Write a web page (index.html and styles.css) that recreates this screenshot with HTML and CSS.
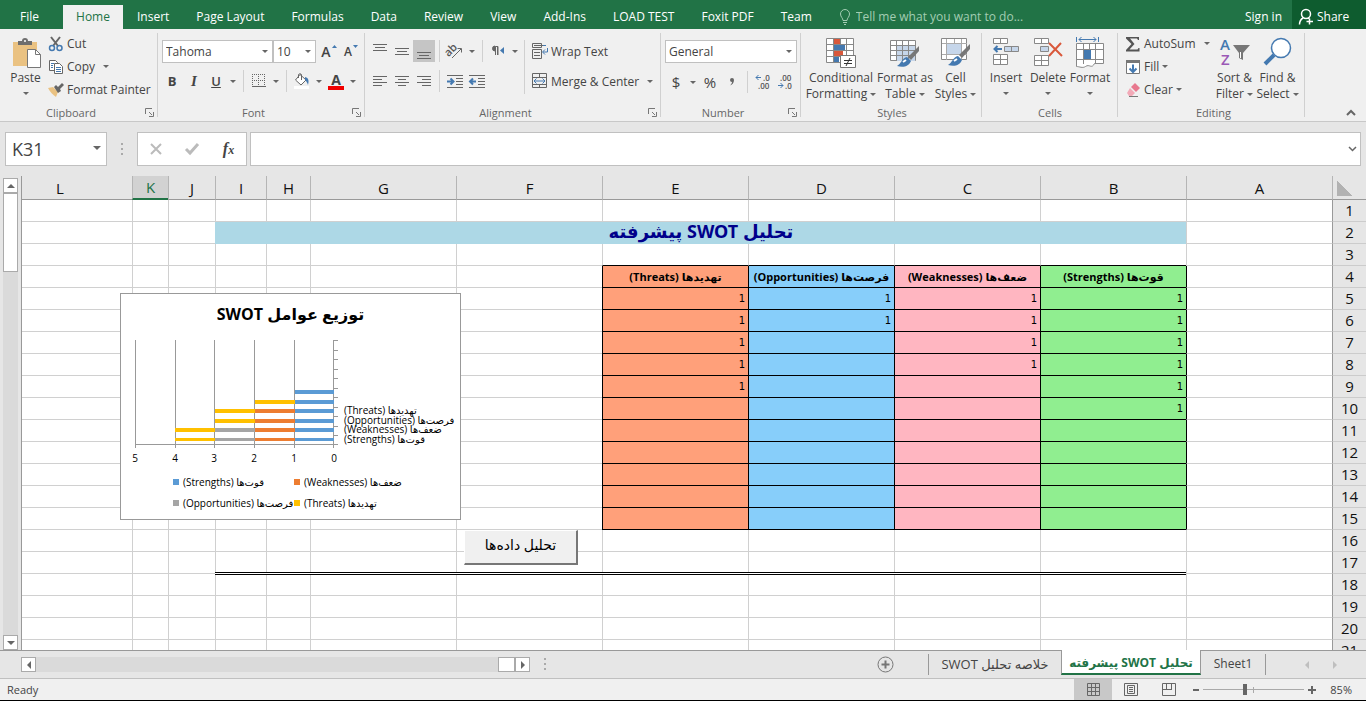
FILE: index.html
```
<!DOCTYPE html>
<html lang="en">
  <head>
    <meta charset="UTF-8" />
    <meta name="viewport" content="width=device-width, initial-scale=1.0" />
    <title>Excel - SWOT</title>
    <link rel="stylesheet" href="styles.css">
  </head>
  <body>
    <nav class="tabs">
      <a href="#" class="file">File</a>
      <a href="#" class="active">Home</a>
      <a href="#">Insert</a>
      <a href="#">Page Layout</a>
      <a href="#">Formulas</a>
      <a href="#">Data</a>
      <a href="#">Review</a>
      <a href="#">View</a>
      <a href="#">Add-Ins</a>
      <a href="#">LOAD TEST</a>
      <a href="#">Foxit PDF</a>
      <a href="#">Team</a>
      <label class="tell">
        <svg width="12" height="16" fill="none" stroke="#a3cdb3"><path d="M4 11.500C4 9 1.500 8 1.500 5a4.500 4.500 0 0 1 9 0C10.500 8 8 9 8 11.500zM4 13.500h4M5 15.500h2" /></svg>
        <input type="text" placeholder="Tell me what you want to do..." />
      </label>
      <a href="#" class="sign">Sign in</a>
      <a href="#" class="share">
        <svg width="16" height="18" fill="none" stroke="#fff" stroke-width="1.500"><circle cx="8" cy="6" r="4.500" /><path d="M5 10C2.500 11.500 1.500 13.500 1.500 16.500M10 10l2 1.500M11.500 10.500v6M8.500 13.500h6.500" /></svg>
        Share
      </a>
    </nav>

    <div class="ribbon">
      <section class="group clipboard">
        <div class="content">
          <button class="big paste">
            <svg width="30" height="32"><path d="M2 5h24v24H2z" fill="#eac282" /><path d="M7 8V4h4a3 3 0 0 1 6 0h4v4z" fill="#6e6e6e" /><circle cx="14" cy="4" r="1" fill="#fff" /><path d="M16.500 12.500h8l5 5v13h-13z" fill="#fff" stroke="#777" /><path d="M24.500 12.500v5h5" fill="none" stroke="#777" /></svg>
            <span>Paste</span><i class="caret"></i>
          </button>
          <div class="list">
            <button class="small">
              <svg width="16" height="16" fill="none"><path d="M3 1l7 9M12 1L5 10" stroke="#666" stroke-width="2" /><circle cx="4" cy="12" r="2.500" stroke="#4479b0" stroke-width="1.500" /><circle cx="11.500" cy="12" r="2.500" stroke="#4479b0" stroke-width="1.500" /></svg>
              Cut
            </button>
            <button class="small">
              <svg width="16" height="16" fill="#fff" stroke="#666"><path d="M1.500 1.500h6l2 2v8h-8z" /><path d="M6.500 4.500h5l3 3v7h-8z" /><path d="M3 4.500h3M3 6.500h2M3 8.500h2M8 8.500h5M8 10.500h5M8 12.500h5" stroke="#4479b0" /></svg>
              Copy <i class="caret apart"></i>
            </button>
            <button class="small">
              <svg width="16" height="16"><path d="M0 6l5-1 5 5-2 5C5 13 2 10 0 6z" fill="#eac282" /><path d="M6 5l2-2 2 2 4-4 2 2-4 4 1 2-3 2z" fill="#666" /></svg>
              Format Painter
            </button>
          </div>
        </div>
        <h2 class="has-launch">Clipboard <svg class="launch" width="9" height="9"><path d="M.5 6V.5H7M4 4l3 3M8.500 4v4.500H4" fill="none" stroke="#777" /></svg></h2>
      </section>

      <section class="group font">
        <div class="content rows">
          <div class="row">
            <div class="combo font-name"><select aria-label="Font"><option>Tahoma</option></select></div>
            <div class="combo font-size"><select aria-label="Font size"><option>10</option></select></div>
            <button class="icon grow" aria-label="Increase font size"><b>A</b><svg width="5" height="14"><path d="M0 4l2.500-3L5 4z" fill="#4479b0" /></svg></button>
            <button class="icon shrink" aria-label="Decrease font size"><b>A</b><svg width="5" height="14"><path d="M0 1h5L2.500 4z" fill="#4479b0" /></svg></button>
          </div>
          <div class="row">
            <button class="icon letter"><b>B</b></button>
            <button class="icon letter"><em>I</em></button>
            <button class="icon letter"><u>U</u></button>
            <button class="drop" aria-label="Underline options"><i class="caret"></i></button>
            <span class="sep"></span>
            <button class="icon" aria-label="Borders"><svg width="14" height="14" fill="none" stroke="#666"><path d="M0 .5h13M0 6.500h13M.5 0v13M6.500 0v13M12.500 0v13" stroke-dasharray="1 1" /><path d="M0 12.500h14" /></svg></button>
            <button class="drop" aria-label="Border options"><i class="caret"></i></button>
            <span class="sep"></span>
            <button class="icon" aria-label="Fill color"><svg width="18" height="16"><path d="M7 1.500l6 5.500-5 5-5.500-5z" fill="#fff" stroke="#666" /><path d="M5.500 5V1.500a2 2 0 0 1 3 0V7" fill="none" stroke="#666" /><path d="M12 4c4 1 4 4 3 8-1-3-2-4-3-5z" fill="#4479b0" /><path d="M1 13h15v3H1z" fill="#fff" /></svg></button>
            <button class="drop" aria-label="Fill options"><i class="caret"></i></button>
            <button class="icon fontcolor"><b>A</b></button>
            <button class="drop" aria-label="Font color options"><i class="caret"></i></button>
          </div>
        </div>
        <h2 class="has-launch">Font <svg class="launch" width="9" height="9"><path d="M.5 6V.5H7M4 4l3 3M8.500 4v4.500H4" fill="none" stroke="#777" /></svg></h2>
      </section>

      <section class="group align">
        <div class="content">
          <div class="rows">
            <div class="row">
              <button class="icon" aria-label="Top align"><svg width="14" height="16" stroke="#666"><path d="M0 1.500h14M2 4.500h10M0 7.500h14" /></svg></button>
              <button class="icon" aria-label="Middle align"><svg width="14" height="16" stroke="#666"><path d="M0 5.500h14M2 8.500h10M0 11.500h14" /></svg></button>
              <button class="icon on" aria-label="Bottom align"><svg width="14" height="16" stroke="#666"><path d="M0 9.500h14M2 12.500h10M0 15.500h14" /></svg></button>
              <span class="sep"></span>
              <button class="icon" aria-label="Orientation"><svg width="18" height="16"><text x="-1" y="10" transform="rotate(-45 6 8)" class="ab">ab</text><path d="M6 15l9-9M11.500 5.500H15.500v4" fill="none" stroke="#666" /></svg></button>
              <button class="drop" aria-label="Orientation options"><i class="caret"></i></button>
              <span class="sep"></span>
              <button class="icon" aria-label="Text direction"><svg width="14" height="10"><path d="M4.500 9V.5H7V9M4 0a2.500 2.500 0 0 0 0 5z" fill="#666" stroke="#666" /><path d="M5.500 1v8" stroke="#f0f0f0" /><path d="M13 1v7L9 4.500z" fill="#4479b0" /></svg></button>
              <button class="drop" aria-label="Direction options"><i class="caret"></i></button>
            </div>
            <div class="row">
              <button class="icon" aria-label="Align left"><svg width="14" height="12" stroke="#666"><path d="M0 1.500h14M0 4.500h9M0 7.500h14M0 10.500h9" /></svg></button>
              <button class="icon" aria-label="Center"><svg width="14" height="12" stroke="#666"><path d="M0 1.500h14M3 4.500h8M0 7.500h14M3 10.500h8" /></svg></button>
              <button class="icon" aria-label="Align right"><svg width="14" height="12" stroke="#666"><path d="M0 1.500h14M5 4.500h9M0 7.500h14M5 10.500h9" /></svg></button>
              <span class="sep"></span>
              <button class="icon" aria-label="Increase indent"><svg width="16" height="13" fill="none" stroke="#666"><path d="M0 .5h16M9 3.500h7M9 6.500h7M9 9.500h7M0 12.500h16" /><path d="M0 6.500h5M3.500 3.500l3 3-3 3" stroke="#4479b0" stroke-width="2" /></svg></button>
              <button class="icon" aria-label="Decrease indent"><svg width="16" height="13" fill="none" stroke="#666"><path d="M0 .5h16M9 3.500h7M9 6.500h7M9 9.500h7M0 12.500h16" /><path d="M2 6.500h5M4 3.500l-3 3 3 3" stroke="#4479b0" stroke-width="2" /></svg></button>
            </div>
          </div>
          <span class="sep tall"></span>
          <div class="rows">
            <button class="small">
              <svg width="16" height="16" fill="none" stroke="#666"><path d="M.5 .5v4h9v-4zM.5 6.500v9h9v-9zM2 2.500h12M2 9.500h6M2 12.500h6" /><path d="M11 2.500h3M15.500 5v4H11M13 6.500L10.500 9l2.500 2.500" stroke="#4479b0" /></svg>
              Wrap Text
            </button>
            <button class="small">
              <svg width="16" height="16" fill="none" stroke="#666"><path d="M.5 .5h14v14H.5zM0 4.500h15M0 11.500h15M7.500 0v4M7.500 12v3" /><path d="M2 8h11M4.500 5.500L2 8l2.500 2.500M10.500 5.500L13 8l-2.500 2.500" stroke="#4479b0" /></svg>
              Merge &amp; Center <i class="caret apart"></i>
            </button>
          </div>
        </div>
        <h2 class="has-launch">Alignment <svg class="launch" width="9" height="9"><path d="M.5 6V.5H7M4 4l3 3M8.500 4v4.500H4" fill="none" stroke="#777" /></svg></h2>
      </section>

      <section class="group number">
        <div class="content rows">
          <div class="combo"><select aria-label="Number format"><option>General</option></select></div>
          <div class="row">
            <button class="icon sign-mark">$</button>
            <button class="drop" aria-label="Currency options"><i class="caret"></i></button>
            <button class="icon sign-mark">%</button>
            <button class="icon" aria-label="Comma style"><svg width="6" height="10"><path d="M1 3a2 2 0 1 1 4 0C5 6 3 8 1 8.500 2.500 7 3 6 3 5a2 2 0 0 1-2-2z" fill="#666" /></svg></button>
            <span class="sep"></span>
            <button class="icon" aria-label="Increase decimal"><svg width="16" height="16" class="dec"><text x="8" y="7">.0</text><text x="3" y="15">.00</text><path d="M1 3.500h5M3.500 1L1 3.500 3.500 6" fill="none" stroke="#4479b0" /></svg></button>
            <button class="icon" aria-label="Decrease decimal"><svg width="16" height="16" class="dec"><text x="3" y="7">.00</text><text x="8" y="15">.0</text><path d="M1 11.500h5M3.500 9L6 11.500 3.500 14" fill="none" stroke="#4479b0" /></svg></button>
          </div>
        </div>
        <h2 class="has-launch">Number <svg class="launch" width="9" height="9"><path d="M.5 6V.5H7M4 4l3 3M8.500 4v4.500H4" fill="none" stroke="#777" /></svg></h2>
      </section>

      <section class="group styles">
        <div class="content">
          <button class="big">
            <svg width="30" height="32"><path d="M.5 1.500h27v24H.5z" fill="#fff" stroke="#888" /><path d="M8 2h6v5H8zM8 13h9v6H8z" fill="#d9583b" /><path d="M8 7h11v6H8zM8 19h5v6H8z" fill="#4479b0" /><path d="M7.500 2v24M20.500 2v24M14.500 2v5M1 7.500h27M1 13.500h27M1 19.500h27" fill="none" stroke="#888" /><path d="M14.500 18.500h15v12h-15z" fill="#fff" stroke="#777" /><path d="M18 23.500h8M18 26.500h8M24 21l-4 8" stroke="#333" /></svg>
            <span>Conditional<br />Formatting <i class="caret"></i></span>
          </button>
          <button class="big">
            <svg width="30" height="32"><path d="M.5 3.500h25v20H.5z" fill="#fff" stroke="#888" /><path d="M7 9h18v15H7z" fill="#c6d6ea" /><path d="M6.500 4v20M12.500 4v20M18.500 4v20M1 8.500h25M1 13.500h25M1 18.500h25" stroke="#888" /><path d="M29 9v5l-8 9-3-3z" fill="#777" /><path d="M17 20l4 4c-2 5-7 7-14 5 4-2 5-8 10-9z" fill="#4479b0" /><path d="M13 25l3-2" stroke="#fff" stroke-width="2" /></svg>
            <span>Format as<br />Table <i class="caret"></i></span>
          </button>
          <button class="big">
            <svg width="30" height="32"><path d="M.5 1.500h25v21H.5z" fill="#fff" stroke="#888" /><path d="M6 7h14v10H6z" fill="#c6d6ea" /><path d="M5.500 2v21M20.500 2v21M13.500 2v4M1 6.500h25M1 17.500h25" stroke="#aaa" /><path d="M29 7v5l-8 9-3-3z" fill="#777" /><path d="M17 19l4 4c-2 5-7 7-14 5 4-2 5-8 10-9z" fill="#4479b0" /><path d="M13 24l3-2" stroke="#fff" stroke-width="2" /></svg>
            <span>Cell<br />Styles <i class="caret"></i></span>
          </button>
        </div>
        <h2>Styles</h2>
      </section>

      <section class="group cells">
        <div class="content">
          <button class="big">
            <svg width="28" height="32" fill="#fff" stroke="#888"><path d="M1.500 1.500h14v5h-14zM8.500 1.500v5M1.500 17.500h14v10h-14zM8.500 17.500v10M1.500 22.500h14" /><path d="M12.500 9.500h14v5h-14zM19.500 9.500v5" fill="#c6d6ea" /><path d="M3 12h7M5.500 9L2.500 12l3 3" fill="none" stroke="#4479b0" stroke-width="2" /></svg>
            <span>Insert</span><i class="caret"></i>
          </button>
          <button class="big">
            <svg width="30" height="32" fill="#fff" stroke="#888"><path d="M1.500 1.500h14v5h-14zM8.500 1.500v5M1.500 18.500h14v10h-14zM8.500 18.500v10M1.500 23.500h14" /><path d="M7.500 9.500h8v5h-8z" fill="#c6d6ea" /><path d="M16 6l13 13M28 6L16 19" stroke="#d9583b" stroke-width="2" /></svg>
            <span>Delete</span><i class="caret"></i>
          </button>
          <button class="big">
            <svg width="30" height="32" fill="#fff" stroke="#888"><path d="M1.500 6.500h27v20h-9c-3 6-5 0-9 3-3 2-6 0-9 0z" /><path d="M1 12.500h27M1 22.500h27M8.500 7v20M20.500 7v20M14.500 7v5" /><path d="M9 13h7v9H9z" fill="#4479b0" stroke="none" /><path d="M1.500 0v5M23.500 0v5M4 2.500h17M6.500 0L4 2.500 6.500 5M18.500 0L21 2.500 18.500 5" fill="none" stroke="#4479b0" /></svg>
            <span>Format</span><i class="caret"></i>
          </button>
        </div>
        <h2>Cells</h2>
      </section>

      <section class="group editing">
        <div class="content">
          <div class="list">
            <button class="small">
              <svg width="16" height="16"><path d="M1 1h13v3h-1l-1-1.500H5L9.500 8 4.500 13.500h8L13.500 12h1v3.500H1v-1.500L6.500 8 1 2.500z" fill="#555" /></svg>
              AutoSum <i class="caret apart"></i>
            </button>
            <button class="small">
              <svg width="16" height="16"><path d="M1.500 1.500h13v13h-13z" fill="#fff" stroke="#777" /><path d="M1 1h14v3H1z" fill="#777" /><path d="M8 5.500v7M4.500 9.500L8 13l3.500-3.500" fill="none" stroke="#4479b0" stroke-width="2" /></svg>
              Fill <i class="caret"></i>
            </button>
            <button class="small">
              <svg width="16" height="16"><path d="M10 1l5 5-4 4-5-5z" fill="#e8788e" /><path d="M5 6l5 5-3 3H4L2 11z" fill="#f2a9b7" /><path d="M4 14.500h9" stroke="#777" /></svg>
              Clear <i class="caret"></i>
            </button>
          </div>
          <button class="big">
            <svg width="30" height="32"><text x="0" y="13" class="az-a">A</text><text x="1" y="28" class="az-z">Z</text><path d="M13 8h17l-7 8v7l-4-2v-5z" fill="#777" /><path d="M20.500 15v6" stroke="#fff" /></svg>
            <span>Sort &amp;<br />Filter <i class="caret"></i></span>
          </button>
          <button class="big">
            <svg width="30" height="32" fill="none" stroke="#4479b0"><path d="M11 18l-9 9" stroke-width="4" /><circle cx="18" cy="11" r="9.500" fill="#fff" stroke-width="1.500" /></svg>
            <span>Find &amp;<br />Select <i class="caret"></i></span>
          </button>
        </div>
        <h2>Editing</h2>
      </section>
      <button class="collapse" aria-label="Collapse ribbon"><svg width="10" height="7"><path d="M1 6l4-4 4 4" fill="none" stroke="#666" stroke-width="2" /></svg></button>
    </div>

    <div class="formula">
      <div class="combo name-box"><input type="text" value="K31" aria-label="Name box" /></div>
      <svg class="dots" width="3" height="13" fill="#aaa"><path d="M0 0h2v2H0zM0 5h2v2H0zM0 10h2v2H0z" /></svg>
      <div class="entry">
        <button aria-label="Cancel"><svg width="12" height="12"><path d="M1 1l10 10M11 1L1 11" stroke="#bbb" stroke-width="2" /></svg></button>
        <button aria-label="Enter"><svg width="14" height="12"><path d="M1 6l4 4 8-9" fill="none" stroke="#bbb" stroke-width="3" /></svg></button>
        <button class="fx">f<small>x</small></button>
      </div>
      <div class="formula-text">
        <input type="text" aria-label="Formula" />
        <svg width="9" height="6"><path d="M1 1l3.500 3.500L8 1" fill="none" stroke="#666" stroke-width="1.500" /></svg>
      </div>
    </div>

    <main class="sheet">
      <div class="vscroll">
        <button aria-label="Scroll up"><i class="caret up"></i></button>
        <div class="track"><div class="thumb"></div></div>
        <button class="down" aria-label="Scroll down"><i class="caret down"></i></button>
      </div>
      <div class="grid">
        <table dir="rtl">
          <colgroup>
            <col class="num" /><col class="wide" /><col class="wide" /><col class="wide" /><col class="wide" /><col class="wide" /><col class="wide" /><col class="wide" />
            <col class="h" /><col class="i" /><col class="j" /><col class="k" /><col />
          </colgroup>
          <thead></thead>
          <tbody></tbody>
        </table>

        <figure class="chart">
          <figcaption dir="rtl">توزیع عوامل SWOT</figcaption>
          <svg width="339" height="130">
            <path class="line" d="M14.500 8v108M54.500 8v108M93.500 8v108M133.500 8v108M173.500 8v108M212.500 8v108M14 112.500h203M213 8.500h4M213 18.500h4M213 27.500h4M213 37.500h4M213 46.500h4M213 56.500h4M213 65.500h4M213 75.500h4M213 84.500h4M213 94.500h4M213 103.500h4" />
            <path fill="#5b9bd5" d="M174 58h39v4h-39zM174 68h39v4h-39zM174 77h39v4h-39zM174 87h39v4h-39zM174 96h39v4h-39zM174 106h39v3h-39z" />
            <path fill="#ed7d31" d="M134 77h40v4h-40zM134 87h40v4h-40zM134 96h40v4h-40zM134 106h40v3h-40z" />
            <path fill="#a5a5a5" d="M94 96h40v4H94zM94 106h40v3H94z" />
            <path fill="#ffc000" d="M134 68h40v4h-40zM94 77h40v4H94zM94 87h40v4H94zM54 96h40v4H54zM54 106h40v3H54z" />
            <g class="cats">
              <text x="223" y="82">تهدیدها (Threats)</text>
              <text x="223" y="92">فرصت‌ها (Opportunities)</text>
              <text x="223" y="101">ضعف‌ها (Weaknesses)</text>
              <text x="223" y="111">قوت‌ها (Strengths)</text>
            </g>
            <g class="axis">
              <text x="14" y="130">5</text><text x="54" y="130">4</text><text x="93" y="130">3</text><text x="133" y="130">2</text><text x="173" y="130">1</text><text x="213" y="130">0</text>
            </g>
          </svg>
          <ul class="legend">
            <li class="s"><span dir="rtl">قوت‌ها (Strengths)</span></li>
            <li class="w"><span dir="rtl">ضعف‌ها (Weaknesses)</span></li>
            <li class="o"><span dir="rtl">فرصت‌ها (Opportunities)</span></li>
            <li class="t"><span dir="rtl">تهدیدها (Threats)</span></li>
          </ul>
        </figure>
        <button class="analyze" dir="rtl">تحلیل داده‌ها</button>
      </div>
    </main>

    <div class="sheet-bar">
      <div class="hscroll">
        <button aria-label="Scroll left"><i class="caret left"></i></button>
        <div class="thumb"></div>
        <button aria-label="Scroll right"><i class="caret right"></i></button>
      </div>
      <svg class="dots" width="3" height="13" fill="#aaa"><path d="M0 0h2v2H0zM0 5h2v2H0zM0 10h2v2H0z" /></svg>
      <button class="add" aria-label="New sheet"><svg width="17" height="17" fill="none" stroke="#777"><circle cx="8.500" cy="8.500" r="7.500" /><path d="M8.500 4.500v8M4.500 8.500h8" stroke-width="2" /></svg></button>
      <a href="#" class="summary" dir="rtl">خلاصه تحلیل SWOT</a>
      <a href="#" class="current" dir="rtl">تحلیل SWOT پیشرفته</a>
      <a href="#" class="first">Sheet1</a>
      <div class="nav"><i class="caret left"></i><i class="caret right"></i></div>
    </div>

    <footer class="status">
      <span class="ready">Ready</span>
      <button class="on" aria-label="Normal view"><svg width="13" height="13" fill="none" stroke="#666"><path d="M.5 .5h12v12H.5zM4.500 0v13M8.500 0v13M0 4.500h13M0 8.500h13" /></svg></button>
      <button aria-label="Page layout view"><svg width="14" height="13" fill="none" stroke="#666"><path d="M.5 .5h13v12H.5zM3.500 2.500h7v8h-7zM5 4.500h4M5 6.500h4M5 8.500h4" /></svg></button>
      <button aria-label="Page break view"><svg width="14" height="13" fill="none" stroke="#666"><path d="M.5 .5h13v12H.5zM4.500 0v6.500M9.500 0v6.500M0 6.500h10" /></svg></button>
      <div class="zoom">
        <b class="minus"></b>
        <input type="range" min="10" max="190" value="85" aria-label="Zoom" />
        <b class="plus"></b>
        <span>85%</span>
      </div>
    </footer>

    <script>
      const letters = 'ABCDEFGHIJKL'.split('');
      const heads = {
        B: 'قوت‌ها (Strengths)',
        C: 'ضعف‌ها (Weaknesses)',
        D: 'فرصت‌ها (Opportunities)',
        E: 'تهدیدها (Threats)'
      };
      // how many rows are filled in each column
      const counts = { B: 6, C: 4, D: 2, E: 5 };

      document.querySelector('thead').innerHTML =
        '<tr><th class="corner"></th>' +
        letters.map((l) => `<th class="${l === 'K' ? 'selected' : ''}">${l}</th>`).join('') +
        '</tr>';

      function cell(row, l) {
        if (row >= 4 && row <= 15 && heads[l]) {
          const text = row === 4 ? heads[l] : row - 4 <= counts[l] ? 1 : '';
          return `<td class="data ${l} ${row === 4 ? 'head' : ''}">${text}</td>`;
        }
        let cls = '';
        if (row === 3 && heads[l]) cls = 'edge-bottom';
        if (row >= 4 && row <= 15 && l === 'A') cls = 'edge-side';
        if (row === 17 && l >= 'B' && l <= 'I') cls = 'double';
        return `<td class="${cls}"></td>`;
      }

      let html = '';
      for (let row = 1; row <= 21; row++) {
        html += `<tr><th>${row}</th>`;
        if (row === 2) {
          html += '<td></td><td colspan="8" class="title">تحلیل SWOT پیشرفته</td><td></td><td></td><td></td>';
        } else {
          html += letters.map((l) => cell(row, l)).join('');
        }
        html += '</tr>';
      }
      document.querySelector('tbody').innerHTML = html;
    </script>
  </body>
</html>
```
FILE: styles.css
```
* {
  margin: 0;
  padding: 0;
  box-sizing: border-box;
}
body {
  display: flex;
  flex-direction: column;
  height: 100vh;
  overflow: hidden;
  font-family: "Open Sans", "Noto Sans", "DejaVu Sans", sans-serif;
  font-size: 12px;
  color: #444;
  background-color: #e6e6e6;
  border-bottom: 1px solid #000;
}
button,
input,
select {
  font: inherit;
  color: inherit;
  background: none;
  border: none;
  outline: none;
}
button {
  cursor: pointer;
}
a {
  color: inherit;
  text-decoration: none;
}
svg {
  display: block;
  flex: none;
  overflow: visible;
}

/* small triangle used by every drop-down */
.caret {
  display: inline-block;
  flex: none;
  border: 3px solid transparent;
  border-top-color: #666;
  border-bottom: none;
  vertical-align: middle;
}
.caret.up {
  border: 4px solid transparent;
  border-bottom-color: #666;
  border-top: none;
}
.caret.down {
  border-width: 4px;
  border-bottom: none;
}
.caret.left {
  border: 4px solid transparent;
  border-right-color: #666;
  border-left: none;
}
.caret.right {
  border: 4px solid transparent;
  border-left-color: #666;
  border-right: none;
}

/* tabs */
.tabs {
  display: flex;
  flex: none;
  height: 29px;
  padding-top: 5px;
  background-color: #217346;
  color: #fff;
  line-height: 24px;
  white-space: nowrap;
}
.tabs a {
  padding: 0 13px 0 14px;
}
.tabs .file {
  width: 63px;
  padding: 0 0 0 20px;
}
.tabs .active {
  width: 60px;
  padding: 0;
  text-align: center;
  background-color: #f0f0f0;
  color: #217346;
}
.tell {
  display: flex;
  flex: 1;
  align-items: center;
  gap: 5px;
  padding-left: 14px;
}
.tell input {
  width: 200px;
}
.tell input::placeholder {
  color: #a3cdb3;
  opacity: 1;
}
.tabs .sign {
  padding: 0 10px;
}
.tabs .share {
  display: flex;
  align-items: center;
  gap: 3px;
  width: 74px;
  margin-top: -5px;
  padding: 5px 0 0 6px;
  background-color: #0e5c2f;
}

/* ribbon */
.ribbon {
  display: flex;
  flex: none;
  height: 93px;
  background-color: #f0f0f0;
  border-bottom: 1px solid #c8c8c8;
  white-space: nowrap;
}
.group {
  display: flex;
  flex-direction: column;
  position: relative;
  flex: none;
  padding: 3px 3px 0;
}
.group::after {
  content: "";
  position: absolute;
  right: 0;
  top: 4px;
  bottom: 4px;
  width: 1px;
  background-color: #d0d0d0;
}
.group h2 {
  font-size: 11px;
  font-weight: normal;
  line-height: 16px;
  text-align: center;
  color: #666;
}
.group .has-launch {
  padding-right: 16px;
}
.launch {
  position: absolute;
  right: 4px;
  bottom: 4px;
}
.content {
  display: flex;
  height: 73px;
}
.rows {
  display: flex;
  flex-direction: column;
  gap: 8px;
  padding-top: 8px;
}
.row {
  display: flex;
  align-items: center;
  height: 22px;
}
.rows .small {
  height: 22px;
}
.list {
  display: flex;
  flex-direction: column;
}
.big {
  display: flex;
  flex-direction: column;
  align-items: center;
  padding-top: 5px;
  line-height: 16px;
}
.big svg {
  margin-bottom: 1px;
}
.big > .caret {
  margin-top: 6px;
}
.small {
  display: flex;
  align-items: center;
  gap: 3px;
  height: 23px;
}
.small .apart {
  margin-left: 5px;
}
.icon {
  display: flex;
  align-items: center;
  justify-content: center;
  width: 22px;
  height: 22px;
}
.icon.on {
  background-color: #c5c5c5;
}
.drop {
  display: flex;
  align-items: center;
  justify-content: center;
  width: 12px;
  height: 22px;
}
.sep {
  width: 1px;
  height: 22px;
  margin: 0 4px;
  background-color: #d0d0d0;
}
.sep.tall {
  height: 54px;
  margin: 8px 7px 0 3px;
}
.combo {
  display: flex;
  position: relative;
  height: 23px;
  background-color: #fff;
  border: 1px solid #c0c0c0;
}
.combo::after {
  content: "";
  position: absolute;
  right: 4px;
  top: 9px;
  border: 3px solid transparent;
  border-top-color: #666;
  border-bottom: none;
}
.combo select,
.combo input {
  width: 100%;
  padding-left: 3px;
  appearance: none;
}
.clipboard {
  width: 158px;
}
.paste {
  width: 45px;
}
.font {
  width: 207px;
}
.font-name {
  width: 111px;
  margin-left: 1px;
}
.font-size {
  width: 43px;
  margin-right: 2px;
}
.grow,
.shrink {
  gap: 1px;
}
.grow {
  font-size: 14px;
}
.grow b,
.shrink b {
  font-weight: 600;
}
.letter {
  font-size: 13px;
}
.letter b {
  font-weight: 700;
}
.letter em {
  font-family: "Liberation Serif", serif;
  font-size: 15px;
  font-weight: bold;
}
.letter u {
  font-weight: 600;
}
.fontcolor {
  font-size: 14px;
  line-height: 15px;
}
.fontcolor b {
  width: 16px;
  height: 18px;
  border-bottom: 4px solid #f00000;
}
.align {
  width: 296px;
  padding-left: 4px;
}
.ab {
  font-size: 11px;
  font-weight: 600;
  fill: #555;
}
.number {
  width: 140px;
  padding: 3px 4px 0;
}
.sign-mark {
  font-size: 15px;
}
.dec {
  font-size: 8px;
  font-weight: 600;
  fill: #555;
}
.styles {
  width: 181px;
  padding-left: 4px;
}
.styles .big:nth-child(1) {
  width: 72px;
}
.styles .big:nth-child(2) {
  width: 56px;
}
.styles .big:nth-child(3) {
  width: 45px;
}
.cells {
  width: 136px;
}
.cells .big {
  width: 42px;
}
.editing {
  width: 187px;
  padding-left: 7px;
}
.editing .list {
  width: 88px;
}
.editing .big {
  width: 43px;
}
.az-a,
.az-z {
  font-size: 15px;
  font-weight: 600;
  fill: #4479b0;
}
.az-z {
  fill: #9b59b6;
}
.collapse {
  margin-left: auto;
  align-self: flex-end;
  padding: 5px 10px;
}

/* formula bar */
.formula {
  display: flex;
  flex: none;
  align-items: center;
  height: 54px;
  padding: 0 5px;
}
.name-box {
  width: 102px;
  height: 34px;
  font-size: 18px;
}
.name-box::after {
  top: 13px;
  right: 5px;
  border-width: 4px;
  border-bottom: none;
}
.name-box input {
  padding-left: 6px;
}
.dots {
  margin: 0 13px 0 14px;
}
.entry {
  display: flex;
  justify-content: space-around;
  width: 110px;
  height: 34px;
  background-color: #fff;
  border: 1px solid #c0c0c0;
}
.entry button {
  padding: 0 8px;
}
.fx {
  font-family: "Liberation Serif", serif;
  font-size: 16px;
  font-style: italic;
  font-weight: bold;
}
.fx small {
  font-size: 12px;
}
.formula-text {
  display: flex;
  flex: 1;
  align-items: center;
  height: 34px;
  margin-left: 3px;
  padding: 0 3px;
  background-color: #fff;
  border: 1px solid #c0c0c0;
}
.formula-text input {
  flex: 1;
}

/* sheet */
.sheet {
  display: flex;
  flex: 1;
  min-height: 0;
}
.vscroll {
  display: flex;
  flex-direction: column;
  width: 21px;
  padding: 2px 3px 0;
}
.vscroll button {
  width: 15px;
  height: 15px;
  line-height: 0;
  background-color: #fff;
  border: 1px solid #aaa;
}
.track {
  flex: 1;
  background-color: #dadada;
}
.track .thumb {
  height: 79px;
  background-color: #fff;
  border: 1px solid #aaa;
}
.grid {
  position: relative;
  flex: 1;
  min-width: 0;
  overflow: hidden;
}
table {
  width: 100%;
  table-layout: fixed;
  border-spacing: 0;
  background-color: #fff;
  border-left: 1px solid #999;
}
col.num {
  width: 34px;
}
col.wide {
  width: 146px;
}
col.h {
  width: 44px;
}
col.i {
  width: 51px;
}
col.j {
  width: 47px;
}
col.k {
  width: 36px;
}
th {
  height: 22px;
  font-size: 15px;
  font-weight: normal;
  line-height: 21px;
  color: #111;
  background-color: #e6e6e6;
}
thead th {
  height: 24px;
  line-height: 22px;
  border-left: 1px solid #b5b5b5;
  border-bottom: 1px solid #999;
}
thead th:last-child {
  border-left: none;
  padding-right: 34px;
}
thead .selected {
  line-height: 21px;
  color: #217346;
  background-color: #d2d2d2;
  border-bottom: 2px solid #217346;
}
.corner {
  background: linear-gradient(to top right, #b2b2b2 50%, transparent 51%) no-repeat 4px 5px / 15px 15px #e6e6e6;
}
tbody th {
  border-left: 1px solid #999;
  border-bottom: 1px solid #ccc;
}
td {
  height: 22px;
  border-left: 1px solid #d0d0d0;
  border-bottom: 1px solid #d0d0d0;
}
td:last-child {
  border-left: none;
}
.title {
  font-family: "Noto Sans", "DejaVu Sans", sans-serif;
  font-size: 18px;
  font-weight: bold;
  line-height: 16px;
  padding-bottom: 4px;
  text-align: center;
  color: #00008b;
  background-color: #add8e6;
  border-color: #add8e6;
}
.data {
  padding: 1px 3px 0;
  font-family: "DejaVu Sans", sans-serif;
  font-size: 10px;
  line-height: 20px;
  text-align: right;
  white-space: nowrap;
  color: #000;
  border-color: #000;
}
.head {
  padding: 0;
  font-family: "Open Sans", "DejaVu Sans", sans-serif;
  font-size: 11px;
  font-weight: bold;
  text-align: center;
}
.B {
  background-color: #90ee90;
}
.C {
  background-color: #ffb6c1;
}
.D {
  background-color: #87cefa;
}
.E {
  background-color: #ffa07a;
}
.edge-bottom {
  border-bottom-color: #000;
}
.edge-side {
  border-left-color: #000;
}
.double {
  position: relative;
}
.double::after {
  content: "";
  position: absolute;
  left: -1px;
  right: 0;
  bottom: -2px;
  border-bottom: 3px double #000;
  background-color: #fff;
}

/* chart and macro button float over the cells */
.chart {
  position: absolute;
  right: 905px;
  top: 117px;
  width: 341px;
  height: 227px;
  background-color: #fff;
  border: 1px solid #999;
  color: #000;
}
.chart figcaption {
  height: 38px;
  padding-top: 8px;
  font-size: 16px;
  font-weight: bold;
  line-height: 24px;
  text-align: center;
}
.chart svg {
  font-size: 10px;
}
.line {
  fill: none;
  stroke: #999;
}
.cats text {
  direction: rtl;
  text-anchor: end;
}
.axis text {
  text-anchor: middle;
}
.legend {
  display: grid;
  grid-template-columns: 121px 121px;
  row-gap: 5px;
  padding: 12px 0 0 52px;
  list-style: none;
  font-size: 10px;
  line-height: 16px;
  white-space: nowrap;
}
.legend li {
  display: flex;
  align-items: center;
  gap: 4px;
}
.legend li::before {
  content: "";
  width: 6px;
  height: 6px;
  background-color: #5b9bd5;
}
.legend .w::before {
  background-color: #ed7d31;
}
.legend .o::before {
  background-color: #a5a5a5;
}
.legend .t::before {
  background-color: #ffc000;
}
.analyze {
  position: absolute;
  right: 788px;
  top: 354px;
  width: 114px;
  height: 35px;
  font-size: 14px;
  line-height: 28px;
  padding-bottom: 4px;
  color: #000;
  background-color: #f0f0f0;
  border: solid;
  border-width: 1px 2px 2px 1px;
  border-color: #fff #777 #777 #fff;
}

/* sheet tabs */
.sheet-bar {
  display: flex;
  flex: none;
  align-items: center;
  height: 28px;
  padding-left: 21px;
  border-top: 1px solid #999;
  white-space: nowrap;
}
.hscroll {
  display: flex;
  flex: none;
  width: 509px;
  height: 15px;
  background-color: #dadada;
}
.hscroll button {
  width: 15px;
  line-height: 0;
  background-color: #fff;
  border: 1px solid #aaa;
}
.hscroll .thumb {
  width: 17px;
  margin-left: auto;
  background-color: #fff;
  border: 1px solid #aaa;
}
.add {
  margin-left: auto;
  margin-right: 34px;
}
.sheet-bar a {
  height: 21px;
  line-height: 20px;
  text-align: center;
}
.sheet-bar .summary {
  width: 133px;
  font-size: 13px;
  border-left: 1px solid #999;
}
.sheet-bar .current {
  align-self: flex-start;
  width: 140px;
  height: 25px;
  margin-top: -1px;
  line-height: 25px;
  background-color: #fff;
  color: #217346;
  font-weight: bold;
  border: 1px solid #999;
  border-top: none;
  border-bottom: 2px solid #217346;
}
.sheet-bar .first {
  width: 65px;
  border-right: 1px solid #999;
}
.nav {
  display: flex;
  gap: 24px;
  width: 100px;
  padding-left: 39px;
  opacity: 0.3;
}

/* status bar */
.status {
  display: flex;
  flex: none;
  align-items: center;
  height: 22px;
  padding: 0 14px 0 7px;
  background-color: #f0f0f0;
  border-top: 1px solid #c0c0c0;
  font-size: 11px;
}
.ready {
  flex: 1;
}
.status button {
  display: flex;
  align-items: center;
  justify-content: center;
  width: 38px;
  height: 21px;
}
.status .on {
  background-color: #c8c8c8;
}
.zoom {
  display: flex;
  align-items: center;
  width: 164px;
  padding-left: 5px;
}
.zoom span {
  margin-left: auto;
}
.minus {
  width: 6px;
  height: 2px;
  background-color: #666;
}
.plus {
  width: 8px;
  height: 8px;
  background: linear-gradient(#666, #666) no-repeat center / 8px 2px, linear-gradient(#666, #666) no-repeat center / 2px 8px;
}
.zoom input {
  width: 101px;
  height: 12px;
  margin: 0 4px;
  appearance: none;
  background: linear-gradient(#aaa, #aaa) no-repeat center / 100% 1px, linear-gradient(#aaa, #aaa) no-repeat center / 1px 6px;
}
.zoom input::-webkit-slider-thumb {
  appearance: none;
  width: 4px;
  height: 11px;
  background-color: #666;
}
```
